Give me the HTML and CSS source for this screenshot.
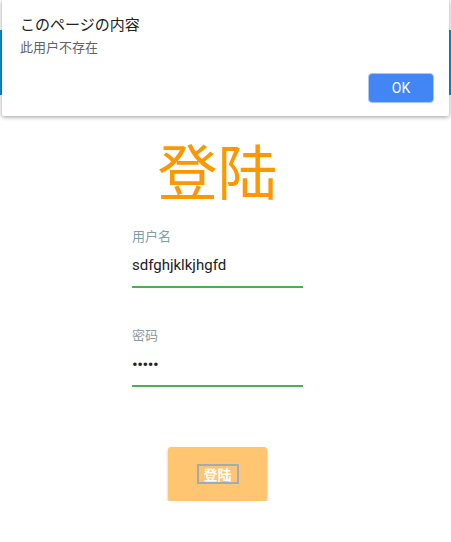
FILE: index.html
```html
<!DOCTYPE html>
<html lang="zh">
<head>
<meta charset="utf-8">
<link rel="stylesheet" href="styles.css">
</head>
<body>
<div class="topbar"></div>
<main class="page">
  <h1 class="title">登陆</h1>
  <div class="field">
    <label class="label user">用户名</label>
    <div class="value">sdfghjklkjhgfd</div>
  </div>
  <div class="field pw">
    <label class="label">密码</label>
    <div class="value dots">•••••</div>
  </div>
  <div class="btnrow">
    <button class="login"><span class="focus">登陆</span></button>
  </div>
</main>
<div class="dialog">
  <div class="dtitle">このページの内容</div>
  <div class="dmsg">此用户不存在</div>
  <div class="dactions"><button class="ok">OK</button></div>
</div>
</body>
</html>
```
FILE: styles.css
```css
html, body {
  margin: 0;
  padding: 0;
  background: #fff;
  font-family: Roboto, "Noto Sans CJK SC", sans-serif;
}
.topbar {
  height: 65px;
  margin-top: 30px;
  background: #0a8fd6;
}
.page {
  display: flex;
  flex-direction: column;
  align-items: center;
  padding-right: 16px;
}
.title {
  margin: 39px 0 0;
  font-weight: 400;
  font-size: 60px;
  line-height: 70px;
  color: #ff9800;
  font-family: "Noto Sans CJK SC", sans-serif;
}
.field {
  width: 171px;
  margin-top: 23px;
  border-bottom: 2px solid #4caf50;
}
.field.pw {
  margin-top: 38px;
}
.label {
  display: block;
  font-size: 13px;
  line-height: 18px;
  color: #8a9aa4;
  font-family: "Noto Sans CJK SC", sans-serif;
}
.label.user { color: #7f9cab; }
.value {
  margin-top: 8px;
  height: 33px;
  font-size: 15px;
  line-height: 24px;
  color: #202124;
  white-space: nowrap;
  overflow: hidden;
}
.dots {
  font-size: 17px;
  letter-spacing: -0.5px;
}
.btnrow {
  margin-top: 60px;
}
.login {
  width: 99px;
  height: 54px;
  border: none;
  border-radius: 3px;
  background: #ffc570;
  box-shadow: 0 2px 3px rgba(0,0,0,0.25);
  display: flex;
  align-items: center;
  justify-content: center;
  padding: 0;
}
.focus {
  display: inline-block;
  color: #fff;
  font-size: 14px;
  line-height: 16px;
  font-weight: 700;
  border: 2px solid #a4a9b6;
  padding: 0 5px;
  font-family: "Noto Sans CJK SC", sans-serif;
}
.dialog {
  position: absolute;
  left: 2px;
  top: 0;
  width: 447px;
  height: 116px;
  background: #fff;
  box-shadow: 0 1px 4px rgba(0,0,0,0.4);
  border-radius: 0 0 2px 2px;
  box-sizing: border-box;
  padding: 14px 15px 0 18px;
}
.dtitle {
  font-size: 15px;
  line-height: 20px;
  color: #202124;
  font-family: "Noto Sans CJK JP", sans-serif;
}
.dmsg {
  margin-top: 4px;
  font-size: 13px;
  line-height: 18px;
  color: #5f6368;
  font-family: "Noto Sans CJK SC", sans-serif;
}
.dactions {
  display: flex;
  justify-content: flex-end;
  margin-top: 17px;
}
.ok {
  width: 66px;
  height: 30px;
  background: #4285f4;
  color: #fff;
  border: 1px solid #a9c7f9;
  border-radius: 4px;
  font-size: 14px;
  font-family: Roboto, sans-serif;
}
```
